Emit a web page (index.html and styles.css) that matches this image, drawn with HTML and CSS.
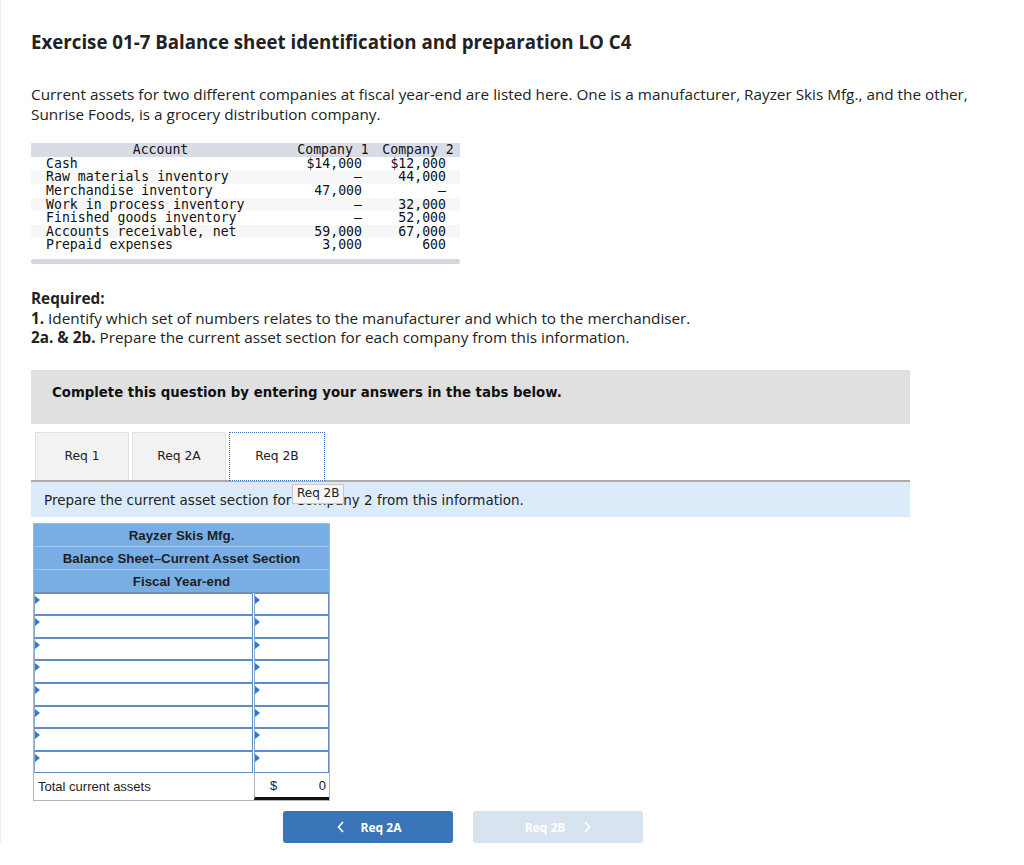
FILE: index.html
```html
<!DOCTYPE html>
<html lang="en">
<head>
<meta charset="utf-8">
<title>Exercise 01-7</title>
<link rel="stylesheet" href="styles.css">
</head>
<body>
<div class="page">
  <h1 class="title">Exercise 01-7 Balance sheet identification and preparation LO C4</h1>
  <p class="intro">Current assets for two different companies at fiscal year-end are listed here. One is a manufacturer, Rayzer Skis Mfg., and the other, Sunrise Foods, is a grocery distribution company.</p>

  <div class="data">
    <div class="drow dhead"><span class="c-acc">Account</span><span class="c-n">Company 1</span><span class="c-n">Company 2</span></div>
    <div class="drow"><span class="c-acc">Cash</span><span class="c-n">$14,000</span><span class="c-n">$12,000</span></div>
    <div class="drow alt"><span class="c-acc">Raw materials inventory</span><span class="c-n">—</span><span class="c-n">44,000</span></div>
    <div class="drow"><span class="c-acc">Merchandise inventory</span><span class="c-n">47,000</span><span class="c-n">—</span></div>
    <div class="drow alt"><span class="c-acc">Work in process inventory</span><span class="c-n">—</span><span class="c-n">32,000</span></div>
    <div class="drow"><span class="c-acc">Finished goods inventory</span><span class="c-n">—</span><span class="c-n">52,000</span></div>
    <div class="drow alt"><span class="c-acc">Accounts receivable, net</span><span class="c-n">59,000</span><span class="c-n">67,000</span></div>
    <div class="drow"><span class="c-acc">Prepaid expenses</span><span class="c-n">3,000</span><span class="c-n">600</span></div>
    <div class="scrollbar"></div>
  </div>

  <div class="required">
    <div><b>Required:</b></div>
    <div><b>1.</b> Identify which set of numbers relates to the manufacturer and which to the merchandiser.</div>
    <div><b>2a. &amp; 2b.</b> Prepare the current asset section for each company from this information.</div>
  </div>

  <div class="notice">Complete this question by entering your answers in the tabs below.</div>

  <div class="tabs">
    <div class="tab">Req 1</div>
    <div class="tab">Req 2A</div>
    <div class="tab active">Req 2B</div>
  </div>
  <div class="instr">
    Prepare the current asset section for Company 2 from this information.
    <span class="tooltip">Req 2B</span>
  </div>

  <div class="bs">
    <div class="bs-head">Rayzer Skis Mfg.</div>
    <div class="bs-head">Balance Sheet–Current Asset Section</div>
    <div class="bs-head">Fiscal Year-end</div>
    <div class="bs-grid">
      <div class="cell in"></div><div class="cell in amt"></div>
      <div class="cell in"></div><div class="cell in amt"></div>
      <div class="cell in"></div><div class="cell in amt"></div>
      <div class="cell in"></div><div class="cell in amt"></div>
      <div class="cell in"></div><div class="cell in amt"></div>
      <div class="cell in"></div><div class="cell in amt"></div>
      <div class="cell in"></div><div class="cell in amt"></div>
      <div class="cell in"></div><div class="cell in amt"></div>
      <div class="cell total-label">Total current assets</div>
      <div class="cell total-amt"><span>$</span><span>0</span></div>
    </div>
  </div>

  <div class="nav">
    <button class="btn prev" type="button">
      <svg class="chev" width="8" height="12" viewBox="0 0 8 12"><path d="M6 1 L1.5 6 L6 11" fill="none" stroke="#fff" stroke-width="1.6"/></svg>
      <span>Req 2A</span>
    </button>
    <button class="btn next" type="button">
      <span>Req 2B</span>
      <svg class="chev" width="8" height="12" viewBox="0 0 8 12"><path d="M2 1 L6.5 6 L2 11" fill="none" stroke="#fff" stroke-width="1.6"/></svg>
    </button>
  </div>
</div>
</body>
</html>
```

FILE: styles.css
```css
html, body {
  margin: 0;
  padding: 0;
  background: #fff;
}
body {
  font-family: "Open Sans", Lato, sans-serif;
  color: #222;
}
.page {
  border-left: 1px solid #ececec;
  padding: 30px 0 0 30px;
  width: 962px;
}
.title {
  margin: 0;
  font-size: 18.7px;
  line-height: 24px;
  font-weight: 700;
  color: #222;
}
.intro {
  margin: 31px 0 0;
  font-size: 15.3px;
  line-height: 19.5px;
}
.data {
  margin-top: 19px;
  width: 429px;
  font-family: "DejaVu Sans Mono", monospace;
  font-size: 13.2px;
  color: #111;
}
.drow {
  display: grid;
  grid-template-columns: 259px 86px 84px;
  height: 13.65px;
  line-height: 13.65px;
}
.drow.alt {
  background: #f7f7f7;
}
.dhead {
  background: #d8dce7;
}
.dhead .c-acc {
  text-align: center;
  padding-left: 0;
}
.dhead .c-n {
  text-align: center;
  padding-right: 0;
}
.c-acc {
  padding-left: 15px;
  white-space: pre;
}
.c-n {
  text-align: right;
  padding-right: 14px;
  white-space: pre;
}
.scrollbar {
  margin-top: 7px;
  height: 5px;
  border-radius: 3px;
  background: #d2d6df;
}
.required {
  margin-top: 25px;
  font-size: 15.3px;
  line-height: 19.5px;
}
.notice {
  margin-top: 22px;
  width: 879px;
  height: 54px;
  box-sizing: border-box;
  background: #e0e0e0;
  padding: 15px 0 0 21px;
  font-family: "DejaVu Sans", sans-serif;
  font-weight: 700;
  font-size: 13.3px;
  line-height: 16px;
  color: #111;
}
.tabs {
  margin-top: 8px;
  display: flex;
  gap: 3px;
  padding-left: 4px;
  width: 875px;
  height: 48px;
}
.tab {
  width: 94px;
  height: 48px;
  box-sizing: border-box;
  background: #f2f2f2;
  border: 1px solid #e2e2e2;
  border-bottom: none;
  display: flex;
  align-items: center;
  justify-content: center;
  font-family: "DejaVu Sans", sans-serif;
  font-size: 12.3px;
  color: #222;
}
.tab.active {
  width: 96px;
  background: #fff;
  border: 1px dotted #3d6fb8;
  position: relative;
  z-index: 1;
  height: 49px;
}
.instr {
  position: relative;
  width: 879px;
  height: 37px;
  box-sizing: border-box;
  background: #dbebf9;
  border-top: 2px solid #acacac;
  padding: 10px 0 0 13px;
  font-family: "DejaVu Sans", sans-serif;
  font-size: 13.5px;
  line-height: 16px;
  color: #222;
}
.tooltip {
  position: absolute;
  left: 261px;
  top: 2px;
  padding: 1px 4px 2px;
  background: #f5f5f5;
  border: 1px solid #c8c8c8;
  font-size: 12px;
  line-height: 15px;
  color: #222;
}
.bs {
  margin: 6px 0 0 2px;
  width: 295px;
  border: 1px solid #b5b5b5;
  font-family: "Liberation Sans", Arial, sans-serif;
}
.bs-head {
  height: 22px;
  line-height: 23px;
  background: #79aee5;
  text-align: center;
  font-weight: 700;
  font-size: 13.3px;
  color: #1e1e1e;
  border-bottom: 1px solid #a4c6ea;
}
.bs-head:nth-child(3) {
  border-bottom: 1px solid #6f8fb5;
}
.bs-grid {
  display: grid;
  grid-template-columns: 219px 76px;
}
.cell {
  position: relative;
  box-sizing: border-box;
}
.cell.in {
  height: 22.6px;
  border: 1px solid #5f8cc4;
  border-left-color: #8aa9cf;
  background: #fff;
}
.cell.in.amt {
  margin-left: 1px;
}
.cell.in::before {
  content: "";
  position: absolute;
  left: 0;
  top: 2px;
  border-top: 4px solid transparent;
  border-bottom: 4px solid transparent;
  border-left: 5px solid #2f7bd1;
}
.total-label {
  height: 27px;
  line-height: 28px;
  padding-left: 4px;
  font-size: 13px;
  color: #222;
}
.total-amt {
  height: 27px;
  margin-left: 1px;
  border-left: 1px solid #b5b5b5;
  border-bottom: 3px solid #111;
  display: flex;
  justify-content: space-between;
  align-items: center;
  padding: 1px 3px 0 15px;
  font-size: 13px;
  color: #222;
}
.nav {
  display: flex;
  gap: 20px;
  padding-left: 252px;
  margin-top: 10px;
}
.btn {
  width: 170px;
  height: 32px;
  border: none;
  border-radius: 3px;
  display: flex;
  align-items: center;
  justify-content: center;
  gap: 16px;
  font-family: "Open Sans", Lato, sans-serif;
  font-weight: 700;
  font-size: 12px;
  color: #fff;
  padding: 0;
}
.btn.prev {
  background: #3a75b8;
  padding-left: 2px;
}
.btn.next {
  background: #d8e3f0;
  padding-left: 0;
  gap: 18px;
}
.chev {
  display: block;
}
```
